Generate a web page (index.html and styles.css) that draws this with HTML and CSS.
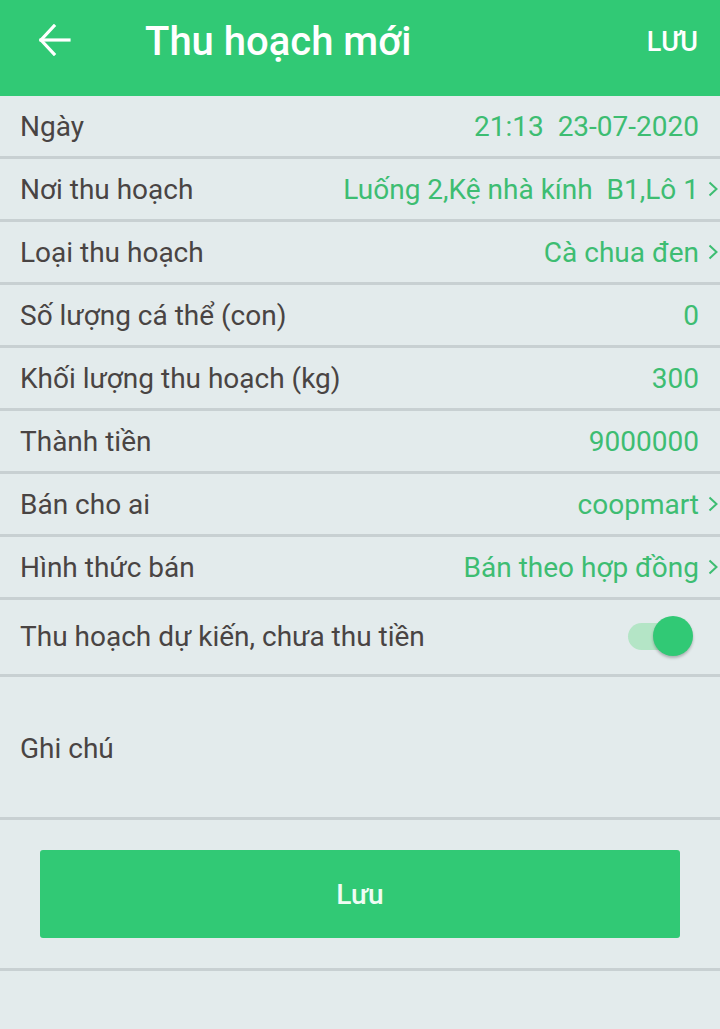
FILE: index.html
```html
<!DOCTYPE html>
<html lang="vi">
<head>
<meta charset="utf-8">
<title>Thu hoạch mới</title>
<link rel="stylesheet" href="styles.css">
</head>
<body>
<header class="appbar">
  <span class="back">
    <svg width="34" height="32" viewBox="0 0 34 32" fill="none" stroke="#fff" stroke-width="3.2" stroke-linecap="square" stroke-linejoin="miter">
      <path d="M3 16 H31"/>
      <path d="M16 2 L3 16 L16 30"/>
    </svg>
  </span>
  <h1 class="title">Thu hoạch mới</h1>
  <span class="action">LƯU</span>
</header>
<main class="form">
  <div class="row"><span class="label">Ngày</span><span class="value pre">21:13  23-07-2020</span><span class="chev"></span></div>
  <div class="row"><span class="label">Nơi thu hoạch</span><span class="value pre">Luống 2,Kệ nhà kính  B1,Lô 1</span><span class="chev"><svg width="10" height="16" viewBox="0 0 10 16"><path d="M1.5 1.5 L8.5 8 L1.5 14.5" fill="none" stroke="#3dbd72" stroke-width="2"/></svg></span></div>
  <div class="row"><span class="label">Loại thu hoạch</span><span class="value">Cà chua đen</span><span class="chev"><svg width="10" height="16" viewBox="0 0 10 16"><path d="M1.5 1.5 L8.5 8 L1.5 14.5" fill="none" stroke="#3dbd72" stroke-width="2"/></svg></span></div>
  <div class="row"><span class="label">Số lượng cá thể (con)</span><span class="value">0</span><span class="chev"></span></div>
  <div class="row"><span class="label">Khối lượng thu hoạch (kg)</span><span class="value">300</span><span class="chev"></span></div>
  <div class="row"><span class="label">Thành tiền</span><span class="value">9000000</span><span class="chev"></span></div>
  <div class="row"><span class="label">Bán cho ai</span><span class="value">coopmart</span><span class="chev"><svg width="10" height="16" viewBox="0 0 10 16"><path d="M1.5 1.5 L8.5 8 L1.5 14.5" fill="none" stroke="#3dbd72" stroke-width="2"/></svg></span></div>
  <div class="row"><span class="label">Hình thức bán</span><span class="value">Bán theo hợp đồng</span><span class="chev"><svg width="10" height="16" viewBox="0 0 10 16"><path d="M1.5 1.5 L8.5 8 L1.5 14.5" fill="none" stroke="#3dbd72" stroke-width="2"/></svg></span></div>
  <div class="row row-toggle"><span class="label">Thu hoạch dự kiến, chưa thu tiền</span>
    <span class="switch"><span class="track"></span><span class="knob"></span></span>
  </div>
  <div class="row row-note"><span class="label">Ghi chú</span></div>
  <div class="btn-area"><button class="btn">Lưu</button></div>
</main>
</body>
</html>
```
FILE: styles.css
```css
html, body {
  margin: 0;
  padding: 0;
  background: #e3ebec;
  font-family: Roboto, "Noto Sans", sans-serif;
}
body {
  width: 720px;
  min-height: 1029px;
}
.appbar {
  height: 96px;
  background: #31c975;
  display: flex;
  align-items: center;
  color: #fff;
}
.back {
  width: 34px;
  height: 32px;
  margin-left: 38px;
  margin-top: -16px;
  display: flex;
}
.title {
  margin: -14px 0 0 73px;
  font-size: 40px;
  font-weight: 500;
}
.action {
  margin: -12px 22px 0 auto;
  font-size: 27px;
  font-weight: 500;
}
.row {
  display: flex;
  align-items: center;
  height: 60px;
  padding-left: 20px;
  border-bottom: 3px solid #c8d0d2;
  font-size: 28px;
}
.label {
  color: #494443;
}
.value {
  margin-left: auto;
  color: #3dbd72;
}
.pre {
  white-space: pre;
}
.chev {
  width: 21px;
  display: flex;
  justify-content: flex-end;
  align-items: center;
  padding-right: 2px;
  margin-top: -1px;
  box-sizing: border-box;
}
.row-toggle {
  height: 74px;
}
.row-toggle .label {
  margin-top: -2px;
}
.switch {
  position: relative;
  margin-left: auto;
  margin-right: 27px;
  margin-top: -2px;
  width: 65px;
  height: 40px;
}
.track {
  position: absolute;
  left: 0;
  top: 7px;
  width: 60px;
  height: 27px;
  border-radius: 14px;
  background: #b4e5c6;
}
.knob {
  position: absolute;
  right: 0;
  top: 0;
  width: 40px;
  height: 40px;
  border-radius: 50%;
  background: #31c975;
  box-shadow: 0 2px 3px rgba(0,0,0,0.25);
}
.row-note {
  height: 140px;
  align-items: center;
}
.row-note .label {
  margin-top: 3px;
}
.btn-area {
  padding: 30px 40px;
  border-bottom: 3px solid #c8d0d2;
}
.btn {
  display: block;
  width: 100%;
  height: 88px;
  border: none;
  border-radius: 3px;
  background: #31c975;
  color: #eefcf3;
  font-family: Roboto, "Noto Sans", sans-serif;
  font-size: 28px;
  font-weight: 500;
}
```
